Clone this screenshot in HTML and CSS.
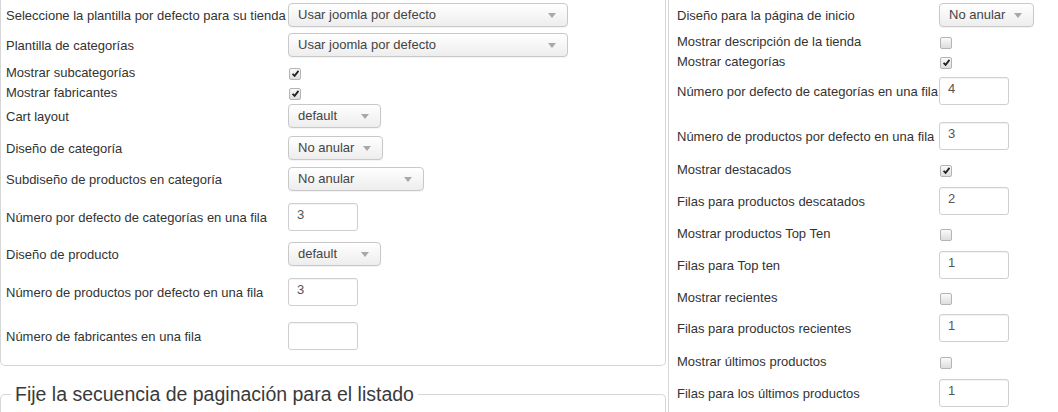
FILE: index.html
```html
<!DOCTYPE html>
<html lang="es">
  <head>
    <meta charset="UTF-8" />
    <title>Configuración de plantillas</title>
    <link rel="stylesheet" href="styles.css">
  </head>
  <body>
    <div class="page">
      <div class="col-left">
        <div class="panel">
          <div class="form-grid left-rows">
            <div class="label">Seleccione la plantilla por defecto para su tienda</div>
            <div class="ctrl"><span class="select w-wide">Usar joomla por defecto<i class="caret"></i></span></div>

            <div class="label">Plantilla de categorías</div>
            <div class="ctrl"><span class="select w-wide">Usar joomla por defecto<i class="caret"></i></span></div>

            <div class="label">Mostrar subcategorías</div>
            <div class="ctrl"><span class="check on"></span></div>

            <div class="label">Mostrar fabricantes</div>
            <div class="ctrl"><span class="check on"></span></div>

            <div class="label">Cart layout</div>
            <div class="ctrl"><span class="select w-sm">default<i class="caret"></i></span></div>

            <div class="label">Diseño de categoría</div>
            <div class="ctrl"><span class="select w-md">No anular<i class="caret"></i></span></div>

            <div class="label">Subdiseño de productos en categoría</div>
            <div class="ctrl"><span class="select w-lg">No anular<i class="caret"></i></span></div>

            <div class="label">Número por defecto de categorías en una fila</div>
            <div class="ctrl"><span class="input">3</span></div>

            <div class="label">Diseño de producto</div>
            <div class="ctrl"><span class="select w-sm">default<i class="caret"></i></span></div>

            <div class="label">Número de productos por defecto en una fila</div>
            <div class="ctrl"><span class="input">3</span></div>

            <div class="label">Número de fabricantes en una fila</div>
            <div class="ctrl"><span class="input"></span></div>
          </div>
        </div>

        <fieldset class="pager">
          <legend>Fije la secuencia de paginación para el listado</legend>
        </fieldset>
      </div>

      <div class="col-right">
        <div class="form-grid right-rows">
          <div class="label">Diseño para la página de inicio</div>
          <div class="ctrl"><span class="select w-md">No anular<i class="caret"></i></span></div>

          <div class="label">Mostrar descripción de la tienda</div>
          <div class="ctrl"><span class="check"></span></div>

          <div class="label">Mostrar categorías</div>
          <div class="ctrl"><span class="check on"></span></div>

          <div class="label">Número por defecto de categorías en una fila</div>
          <div class="ctrl"><span class="input">4</span></div>

          <div class="label">Número de productos por defecto en una fila</div>
          <div class="ctrl"><span class="input">3</span></div>

          <div class="label">Mostrar destacados</div>
          <div class="ctrl"><span class="check on"></span></div>

          <div class="label">Filas para productos descatados</div>
          <div class="ctrl"><span class="input">2</span></div>

          <div class="label">Mostrar productos Top Ten</div>
          <div class="ctrl"><span class="check"></span></div>

          <div class="label">Filas para Top ten</div>
          <div class="ctrl"><span class="input">1</span></div>

          <div class="label">Mostrar recientes</div>
          <div class="ctrl"><span class="check"></span></div>

          <div class="label">Filas para productos recientes</div>
          <div class="ctrl"><span class="input">1</span></div>

          <div class="label">Mostrar últimos productos</div>
          <div class="ctrl"><span class="check"></span></div>

          <div class="label">Filas para los últimos productos</div>
          <div class="ctrl"><span class="input">1</span></div>
        </div>
      </div>
    </div>
  </body>
</html>
```

FILE: styles.css
```css
* {
  box-sizing: border-box;
}

body {
  margin: 0;
  background: #fff;
  font-family: "Liberation Sans", Arial, sans-serif;
  font-size: 13px;
  color: #333;
  overflow: hidden;
}

.page {
  display: flex;
  column-gap: 2px;
}

.col-left {
  width: 666px;
  flex-shrink: 0;
}

.panel {
  border: 1px solid #d6d6d6;
  border-top: none;
  border-radius: 0 0 5px 5px;
  padding: 0 0 9px 5px;
}

.col-right {
  flex: 1;
  border-left: 1px solid #d6d6d6;
  padding-left: 8px;
  height: 412px;
}

.form-grid {
  display: grid;
  align-items: center;
}

.left-rows {
  grid-template-columns: 282px 1fr;
  grid-template-rows: 30px 30px 24px 16px 32px 32px 30px 46px 28px 48px 40px;
}

.right-rows {
  grid-template-columns: 262px 1fr;
  grid-template-rows: 30px 22px 18px 42px 48px 18px 46px 18px 46px 18px 44px 22px 42px;
}

.label {
  white-space: nowrap;
}

.ctrl {
  display: flex;
  align-items: center;
}

.select {
  position: relative;
  display: block;
  height: 24px;
  line-height: 22px;
  padding: 0 24px 0 9px;
  border: 1px solid #c8c8c8;
  border-radius: 4px;
  background: linear-gradient(#ffffff, #ededed);
  box-shadow: 0 1px 1px rgba(0, 0, 0, 0.05);
  color: #444;
  white-space: nowrap;
}

.caret {
  position: absolute;
  right: 11px;
  top: 9px;
  border-left: 4px solid transparent;
  border-right: 4px solid transparent;
  border-top: 5px solid #a8a8a8;
}

.w-wide { width: 280px; }
.w-sm { width: 93px; }
.w-md { width: 95px; }
.w-lg { width: 136px; }

.input {
  display: block;
  width: 70px;
  height: 28px;
  line-height: 22px;
  padding: 0 8px;
  border: 1px solid #cfcfcf;
  border-radius: 3px;
  background: #fff;
  box-shadow: inset 0 1px 1px rgba(0, 0, 0, 0.05);
  color: #555;
}

.check {
  display: block;
  width: 12px;
  height: 12px;
  margin-left: 1px;
  margin-top: 3px;
  border: 1px solid #b4b4b4;
  border-radius: 2px;
  background: linear-gradient(#fafafa, #dedede);
  position: relative;
}

.check.on::after {
  content: "";
  position: absolute;
  left: 2px;
  top: 1px;
  width: 7px;
  height: 7px;
  background: url("data:image/svg+xml;utf8,<svg xmlns='http://www.w3.org/2000/svg' viewBox='0 0 7 7'><path d='M0.6 3.8 L2.6 5.9 L6.5 0.8' fill='none' stroke='%23222' stroke-width='1.8'/></svg>") no-repeat;
}

.pager {
  margin: 17px 0 0 0;
  padding: 0 0 0 10px;
  border: 1px solid #d6d6d6;
  border-bottom: none;
  border-radius: 5px 5px 0 0;
  height: 40px;
}

.pager legend {
  padding: 0 4px;
  font-size: 19.5px;
  color: #3a3a3a;
}
```
